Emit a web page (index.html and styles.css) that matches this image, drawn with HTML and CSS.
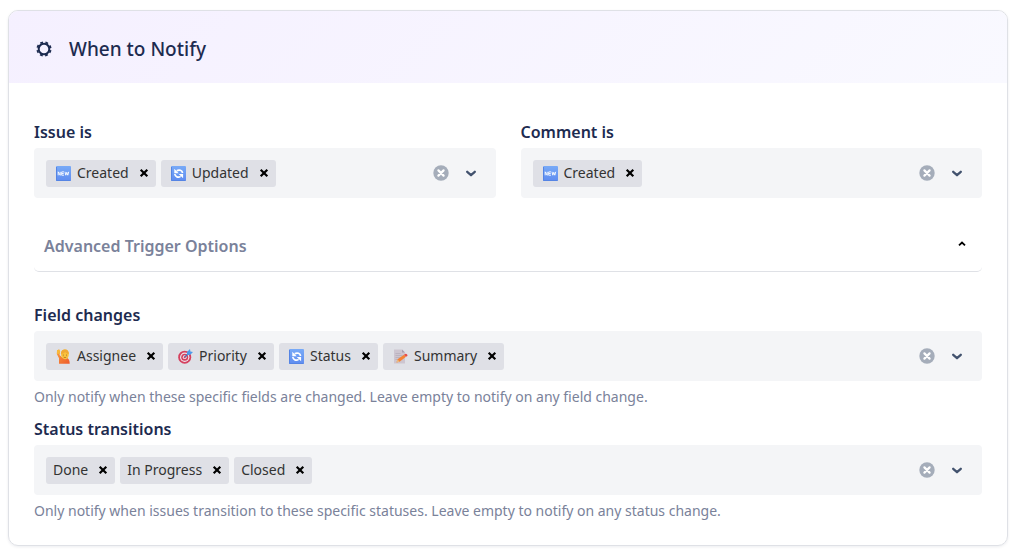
FILE: index.html
```html
<!DOCTYPE html>
<html lang="en">
<head>
    <meta charset="UTF-8">
    <meta name="viewport" content="width=device-width, initial-scale=1.0">
    <title>When to Notify</title>
    <link rel="stylesheet" href="styles.css">
</head>
<body>
    <!-- Shared icons -->
    <svg class="sprite" aria-hidden="true">
        <defs>
            <linearGradient id="blue" x1="0" y1="0" x2="0" y2="1">
                <stop offset="0" stop-color="#78aaf7"/>
                <stop offset="1" stop-color="#5f8cf0"/>
            </linearGradient>
            <linearGradient id="shirt" x1="0" y1="0" x2="1" y2="1">
                <stop offset="0" stop-color="#f9a03c"/>
                <stop offset="1" stop-color="#ee5a2e"/>
            </linearGradient>
        </defs>
        <symbol id="icon-new" viewBox="0 0 15 15">
            <rect width="15" height="15" rx="1" fill="url(#blue)"/>
            <path d="M0.5 1v13.5h14" fill="none" stroke="#5584e4"/>
            <path d="M2.2 9.3V5.8l2 3.5V5.8M8 5.9H5.7v3.3H8M5.7 7.5h2M9 5.8l.8 3.4 1-2.9 1 2.9.9-3.4" fill="none" stroke="#fff" stroke-width=".9"/>
        </symbol>
        <symbol id="icon-sync" viewBox="0 0 15 15">
            <rect width="15" height="15" rx="1" fill="url(#blue)"/>
            <path d="M0.5 1v13.5h14" fill="none" stroke="#5584e4"/>
            <path d="M11.6 7C11.2 4.4 8.2 3.2 5.7 4.8M3.8 8c.3 2.8 3.4 4 5.8 2.4" fill="none" stroke="#fff" stroke-width="1.7"/>
            <path d="M3.3 2.8v4.4h4.4zM12.1 12.2V8H7.7z" fill="#fff"/>
        </symbol>
        <symbol id="icon-person" viewBox="0 0 15 15">
            <path d="M1 1.2l2.2-.7.8 2.3-.5 3.2 3 2.8h4.2c2 .6 3 2.6 3 6H3V9.3L.8 5z" fill="url(#shirt)"/>
            <path d="M1 1.2l2.2-.7.9 2-.6 2.3L1 5z" fill="#f8b93b"/>
            <path d="M5 5C5 1.8 6.8.5 9 .5s3.8 1.7 3.8 4.7-1.6 5-3.8 5S5 8 5 5z" fill="#fac23c"/>
            <path d="M4.9 5C4.9 1.3 7 .3 9.2.4c2.3.1 3.9 1.8 3.6 4.7C11 4.7 10 4 9.2 3 8.2 4.3 6.5 4.8 4.9 5z" fill="#f0aa35"/>
            <path d="M7.3 5.6v1M10.5 5.6v1M7.7 8.1c.9.6 1.7.6 2.5 0" fill="none" stroke="#8b5529" stroke-width=".7"/>
        </symbol>
        <symbol id="icon-target" viewBox="0 0 15 15">
            <circle cx="6.7" cy="8.2" r="6.5" fill="#d5415f"/>
            <circle cx="6.7" cy="8.2" r="4.7" fill="#eee5ed"/>
            <circle cx="6.7" cy="8.2" r="3.5" fill="#d5415f"/>
            <circle cx="6.7" cy="8.2" r="1.9" fill="#eee5ed"/>
            <circle cx="6.7" cy="8.2" r="1" fill="#d5415f"/>
            <path d="M6.7 8.2l4-4" stroke="#3f72b8" stroke-width="1.2"/>
            <path d="M9 5.7V3L12 0l.4 2.5L15 3l-3 3z" fill="#4e9bea"/>
        </symbol>
        <symbol id="icon-memo" viewBox="0 0 15 15">
            <path d="M1 .5h8L12 3.5v11H1z" fill="#cdc5d0"/>
            <path d="M9 .5v3h3z" fill="#a99eb0"/>
            <path d="M2.5 4.5h5M2.5 6.5h7M2.5 8.5h5M2.5 10.5h3" stroke="#b3aab9" stroke-width=".7"/>
            <path d="M3.5 13.5l1-3.2L11 5.8l2 2-6.4 4.9z" fill="#f58335"/>
            <path d="M11 5.8l1.2-.9c1.5-.3 2.5.9 2.2 2.1L13 7.8z" fill="#e84b47"/>
            <path d="M3.5 13.5l1-3.2 2.1 2.4z" fill="#e8bb87"/>
        </symbol>
        <symbol id="icon-remove" viewBox="0 0 14 14">
            <path d="M3.7 3.7l6.6 6.6M10.3 3.7l-6.6 6.6" stroke="currentColor" stroke-width="2.2"/>
        </symbol>
        <symbol id="icon-clear" viewBox="0 0 16 16">
            <circle cx="8" cy="8" r="7.7" fill="currentColor"/>
            <path d="M5.4 5.4l5.2 5.2M10.6 5.4l-5.2 5.2" stroke="#fff" stroke-width="2.2" stroke-linecap="round"/>
        </symbol>
        <symbol id="icon-chevron" viewBox="0 0 16 16">
            <path d="M4.2 6.8L8 10.2l3.8-3.4" fill="none" stroke="currentColor" stroke-width="2.3" stroke-linecap="round" stroke-linejoin="round"/>
        </symbol>
    </svg>

    <section class="card">
        <header class="card-header">
            <svg class="header-icon" viewBox="0 0 16 16" aria-hidden="true">
                <circle cx="8" cy="8" r="5.3" fill="none" stroke="currentColor" stroke-width="2"/>
                <circle cx="8" cy="8" r="6.7" fill="none" stroke="currentColor" stroke-width="1.8" stroke-dasharray="2.8 2.462" stroke-dashoffset="-1.231"/>
            </svg>
            <h2>When to Notify</h2>
        </header>

        <form class="card-body">
            <div class="field-row">
                <div class="field">
                    <label for="issue">Issue is</label>
                    <div class="select">
                        <div class="chips">
                            <span class="chip"><svg class="emoji"><use href="#icon-new"/></svg>Created<button type="button" aria-label="Remove Created"><svg><use href="#icon-remove"/></svg></button></span>
                            <span class="chip"><svg class="emoji"><use href="#icon-sync"/></svg>Updated<button type="button" aria-label="Remove Updated"><svg><use href="#icon-remove"/></svg></button></span>
                            <input type="text" id="issue">
                        </div>
                        <button type="button" class="clear" aria-label="Clear all"><svg><use href="#icon-clear"/></svg></button>
                        <button type="button" class="open" aria-label="Open list"><svg><use href="#icon-chevron"/></svg></button>
                    </div>
                </div>
                <div class="field">
                    <label for="comment">Comment is</label>
                    <div class="select">
                        <div class="chips">
                            <span class="chip"><svg class="emoji"><use href="#icon-new"/></svg>Created<button type="button" aria-label="Remove Created"><svg><use href="#icon-remove"/></svg></button></span>
                            <input type="text" id="comment">
                        </div>
                        <button type="button" class="clear" aria-label="Clear all"><svg><use href="#icon-clear"/></svg></button>
                        <button type="button" class="open" aria-label="Open list"><svg><use href="#icon-chevron"/></svg></button>
                    </div>
                </div>
            </div>

            <button type="button" class="accordion" aria-expanded="true">
                Advanced Trigger Options
                <svg viewBox="0 0 8 8" aria-hidden="true"><path d="M1 5.3L4 2.5l3 2.8" fill="none" stroke="currentColor" stroke-width="1.8"/></svg>
            </button>

            <div class="field">
                <label for="fields">Field changes</label>
                <div class="select">
                    <div class="chips">
                        <span class="chip"><svg class="emoji"><use href="#icon-person"/></svg>Assignee<button type="button" aria-label="Remove Assignee"><svg><use href="#icon-remove"/></svg></button></span>
                        <span class="chip"><svg class="emoji"><use href="#icon-target"/></svg>Priority<button type="button" aria-label="Remove Priority"><svg><use href="#icon-remove"/></svg></button></span>
                        <span class="chip"><svg class="emoji"><use href="#icon-sync"/></svg>Status<button type="button" aria-label="Remove Status"><svg><use href="#icon-remove"/></svg></button></span>
                        <span class="chip"><svg class="emoji"><use href="#icon-memo"/></svg>Summary<button type="button" aria-label="Remove Summary"><svg><use href="#icon-remove"/></svg></button></span>
                        <input type="text" id="fields">
                    </div>
                    <button type="button" class="clear" aria-label="Clear all"><svg><use href="#icon-clear"/></svg></button>
                    <button type="button" class="open" aria-label="Open list"><svg><use href="#icon-chevron"/></svg></button>
                </div>
                <p class="help">Only notify when these specific fields are changed. Leave empty to notify on any field change.</p>
            </div>

            <div class="field">
                <label for="transitions">Status transitions</label>
                <div class="select">
                    <div class="chips">
                        <span class="chip">Done<button type="button" aria-label="Remove Done"><svg><use href="#icon-remove"/></svg></button></span>
                        <span class="chip">In Progress<button type="button" aria-label="Remove In Progress"><svg><use href="#icon-remove"/></svg></button></span>
                        <span class="chip">Closed<button type="button" aria-label="Remove Closed"><svg><use href="#icon-remove"/></svg></button></span>
                        <input type="text" id="transitions">
                    </div>
                    <button type="button" class="clear" aria-label="Clear all"><svg><use href="#icon-clear"/></svg></button>
                    <button type="button" class="open" aria-label="Open list"><svg><use href="#icon-chevron"/></svg></button>
                </div>
                <p class="help">Only notify when issues transition to these specific statuses. Leave empty to notify on any status change.</p>
            </div>
        </form>
    </section>
</body>
</html>
```
FILE: styles.css
```css
* {
    box-sizing: border-box;
    margin: 0;
    padding: 0;
}

body {
    font-family: 'Segoe UI', 'Noto Sans', 'Open Sans', sans-serif;
    font-size: 14px;
    line-height: 20px;
    color: #1d2b50;
    background-color: #ffffff;
    padding: 10px 7px 6px 8px;
}

button {
    border: none;
    background: none;
    font: inherit;
    color: inherit;
    cursor: pointer;
}

svg {
    display: block;
    flex: none;
}

.sprite {
    position: absolute;
    width: 0;
    height: 0;
}

.card {
    border: 1px solid #dfe1e6;
    border-radius: 10px;
    box-shadow: 0 1px 3px rgba(9, 30, 66, 0.08);
    overflow: hidden;
}

.card-header {
    display: flex;
    align-items: center;
    gap: 17px;
    padding: 26px 27px 22px;
    background: linear-gradient(135deg, #f5f0ff 0%, #f9f9ff 100%);
}

.header-icon {
    width: 16px;
    height: 16px;
}

.card-header h2 {
    font-size: 19px;
    line-height: 24px;
    font-weight: 500;
}

.card-body {
    padding: 39px 25px 24px;
}

.field-row {
    display: grid;
    grid-template-columns: 1fr 1fr;
    gap: 25px;
}

.field label {
    display: block;
    margin-bottom: 6px;
    font-size: 16px;
    font-weight: 600;
}

.select {
    display: flex;
    align-items: center;
    gap: 14px;
    min-height: 50px;
    padding: 10px 17px 10px 12px;
    background-color: #f4f5f7;
    border-radius: 4px;
}

.chips {
    display: flex;
    flex: 1;
    flex-wrap: wrap;
    gap: 5px;
    min-width: 0;
}

.chips input {
    flex: 1;
    width: 20px;
    min-width: 0;
    border: none;
    outline: none;
    background: none;
    font: inherit;
}

.chip {
    display: flex;
    align-items: center;
    height: 27px;
    padding: 0 5px 0 7px;
    background-color: #dfe0e6;
    border-radius: 3px;
    color: #333333;
}

.emoji {
    width: 15px;
    height: 15px;
    margin: 0 6px 0 3px;
}

.chip button {
    margin-left: 8px;
    color: #000000;
}

.chip button svg {
    width: 14px;
    height: 14px;
}

.clear {
    color: #a5adba;
}

.open {
    color: #42526e;
}

.clear svg,
.open svg {
    width: 16px;
    height: 16px;
}

.accordion {
    display: flex;
    justify-content: space-between;
    align-items: center;
    width: 100%;
    height: 50px;
    margin: 24px 0 33px;
    padding: 0 16px 2px 10px;
    border-bottom: 1px solid #dfe1e6;
    border-radius: 5px;
    font-size: 16px;
    font-weight: 600;
    color: #7a829a;
}

.accordion svg {
    width: 8px;
    height: 8px;
    margin-bottom: 4px;
    color: #000000;
}

.help {
    margin: 6px 0 12px;
    color: #7a829a;
}

.field:last-child .help {
    margin-bottom: 0;
}
```
